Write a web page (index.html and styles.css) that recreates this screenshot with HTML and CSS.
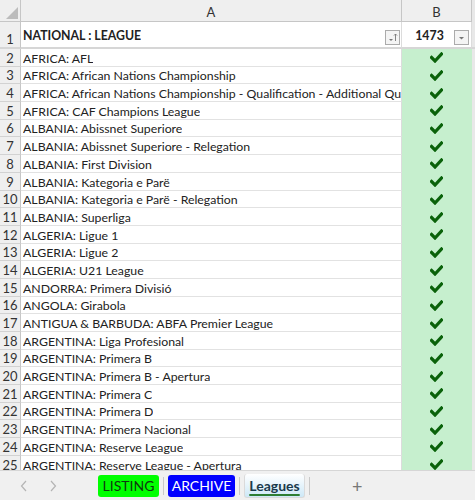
FILE: index.html
```html
<!DOCTYPE html>
<html>
<head>
<meta charset="utf-8">
<link rel="stylesheet" href="styles.css">
</head>
<body>
<div class="sheet">
  <div class="grid" id="grid">
    <div class="corner"><svg width="12" height="12" viewBox="0 0 12 12"><polygon points="12,0 12,12 0,12" fill="#bcbcbc"/></svg></div>
    <div class="colhead">A</div>
    <div class="colhead">B</div>
    <div class="pad"></div>

    <div class="rowhead r1">1</div>
    <div class="cell hdr r1"><span class="txt">NATIONAL : LEAGUE</span>
      <span class="fbtn"><svg width="13" height="13" viewBox="0 0 13 13"><polygon points="3,8 7,8 5,10" fill="#777"/><path d="M9.5 3 V10 M8 4.5 L9.5 3 L11 4.5" stroke="#777" stroke-width="0.9" fill="none"/></svg></span>
    </div>
    <div class="cell hdrb r1"><span class="num">1473</span>
      <span class="fbtn b"><svg width="13" height="13" viewBox="0 0 13 13"><polygon points="4,6 9,6 6.5,8.5" fill="#777"/></svg></span>
    </div>
    <div class="pad r1"></div>
  </div>
  <div class="tabbar">
    <span class="nav"><svg width="8" height="12" viewBox="0 0 8 12"><path d="M6 1 L1.5 6 L6 11" stroke="#b4b4b4" stroke-width="1.2" fill="none"/></svg></span>
    <span class="nav"><svg width="8" height="12" viewBox="0 0 8 12"><path d="M2 1 L6.5 6 L2 11" stroke="#b4b4b4" stroke-width="1.2" fill="none"/></svg></span>
    <span class="tab listing">LISTING</span>
    <span class="sep"></span>
    <span class="tab archive">ARCHIVE</span>
    <span class="sep"></span>
    <span class="tab active">Leagues</span>
    <span class="sep"></span>
    <span class="plus">+</span>
  </div>
</div>
<script src="app.js"></script>
</body>
</html>
```
FILE: app.js
```js
var rows = [
"AFRICA: AFL",
"AFRICA: African Nations Championship",
"AFRICA: African Nations Championship - Qualification - Additional Qualification",
"AFRICA: CAF Champions League",
"ALBANIA: Abissnet Superiore",
"ALBANIA: Abissnet Superiore - Relegation",
"ALBANIA: First Division",
"ALBANIA: Kategoria e Parë",
"ALBANIA: Kategoria e Parë - Relegation",
"ALBANIA: Superliga",
"ALGERIA: Ligue 1",
"ALGERIA: Ligue 2",
"ALGERIA: U21 League",
"ANDORRA: Primera Divisió",
"ANGOLA: Girabola",
"ANTIGUA & BARBUDA: ABFA Premier League",
"ARGENTINA: Liga Profesional",
"ARGENTINA: Primera B",
"ARGENTINA: Primera B - Apertura",
"ARGENTINA: Primera C",
"ARGENTINA: Primera D",
"ARGENTINA: Primera Nacional",
"ARGENTINA: Reserve League",
"ARGENTINA: Reserve League - Apertura"
];
var g = document.getElementById('grid');
var check = '<svg width="13" height="11" viewBox="0 0 13 11"><path d="M1.5 5.5 L5 9 L11.5 2" stroke="#0a620a" stroke-width="3.2" fill="none" stroke-linecap="square"/></svg>';
rows.forEach(function (t, i) {
  var h = document.createElement('div'); h.className = 'rowhead'; h.textContent = i + 2; g.appendChild(h);
  var a = document.createElement('div'); a.className = 'cell'; var s = document.createElement('span'); s.className = 'txt'; s.textContent = t; a.appendChild(s); g.appendChild(a);
  var b = document.createElement('div'); b.className = 'cell ok'; b.innerHTML = check; g.appendChild(b);
  var p = document.createElement('div'); p.className = 'pad'; g.appendChild(p);
});
```
FILE: styles.css
```css
html, body { margin: 0; padding: 0; }
body { width: 475px; height: 500px; overflow: hidden; background: #fff; font-family: Lato, "Liberation Sans", sans-serif; font-size: 12px; color: #222; }
.sheet { width: 475px; height: 500px; display: flex; flex-direction: column; }
.grid { height: 470px; overflow: hidden; display: grid; grid-template-columns: 21px 381px 70px 3px; grid-template-rows: 22px 27px; grid-auto-rows: 17.7px; }
.corner { background: #efefef; border-right: 1px solid #c6c6c6; border-bottom: 1px solid #c6c6c6; box-sizing: border-box; display: flex; align-items: flex-end; justify-content: flex-end; padding: 0 2px 2px 0; }
.colhead { background: #efefef; border-right: 1px solid #c6c6c6; border-bottom: 1px solid #c6c6c6; box-sizing: border-box; display: flex; align-items: center; justify-content: center; font-size: 13px; color: #333; padding-top: 2px; }
.pad { background: #e8e8e8; }
.rowhead { background: #efefef; border-right: 1px solid #c6c6c6; border-bottom: 1px solid #d2d2d2; box-sizing: border-box; display: flex; align-items: flex-end; justify-content: center; color: #333; font-size: 13px; line-height: 15px; padding-bottom: 0; }
.cell { border-right: 1px solid #dcdcdc; border-bottom: 1px solid #e2e2e2; box-sizing: border-box; display: flex; align-items: flex-end; overflow: hidden; white-space: nowrap; line-height: 15px; padding: 0 0 0 2px; position: relative; font-size: 12.3px; }
.txt { overflow: hidden; }
.r1 { border-bottom: 2px solid #d6d6d6; }
.hdr { font-weight: bold; padding-bottom: 4px; }
.hdrb { justify-content: center; font-weight: bold; padding: 0 0 4px 0; }
.hdrb .num { margin-right: 14px; }
.fbtn { position: absolute; right: 1px; bottom: 2px; width: 13px; height: 13px; border: 1px solid #ababab; background: #f4f4f4; display: flex; }
.fbtn.b { right: 2px; }
.ok { background: #c6efce; border-right: 1px solid #c6efce; border-bottom: none; justify-content: center; align-items: center; padding: 0; }
.tabbar { height: 30px; background: #f0f0f0; border-top: 1px solid #d6d6d6; box-sizing: border-box; display: flex; align-items: center; }
.nav { width: 8px; height: 12px; display: flex; margin-left: 20px; }
.nav + .nav { margin-left: 21px; }
.tab { height: 22px; display: flex; align-items: center; justify-content: center; border-radius: 3px; font-size: 14px; box-sizing: border-box; }
.listing { margin-left: 41px; width: 61px; background: #00ff00; color: #103810; }
.archive { width: 67px; background: #0000ff; color: #fff; }
.sep { width: 1px; height: 18px; background: #c8c8c8; margin: 0 4px; }
.active { width: 61px; height: 24px; background: linear-gradient(#ffffff, #cde8f7); color: #1b3a4b; font-weight: bold; border: 1px solid #dadada; border-top: none; }
.active { text-decoration: underline; text-decoration-color: #2e7d32; text-underline-offset: 3px; text-decoration-thickness: 2px; }
.plus { margin-left: 38px; font-size: 18px; color: #777; }
```
